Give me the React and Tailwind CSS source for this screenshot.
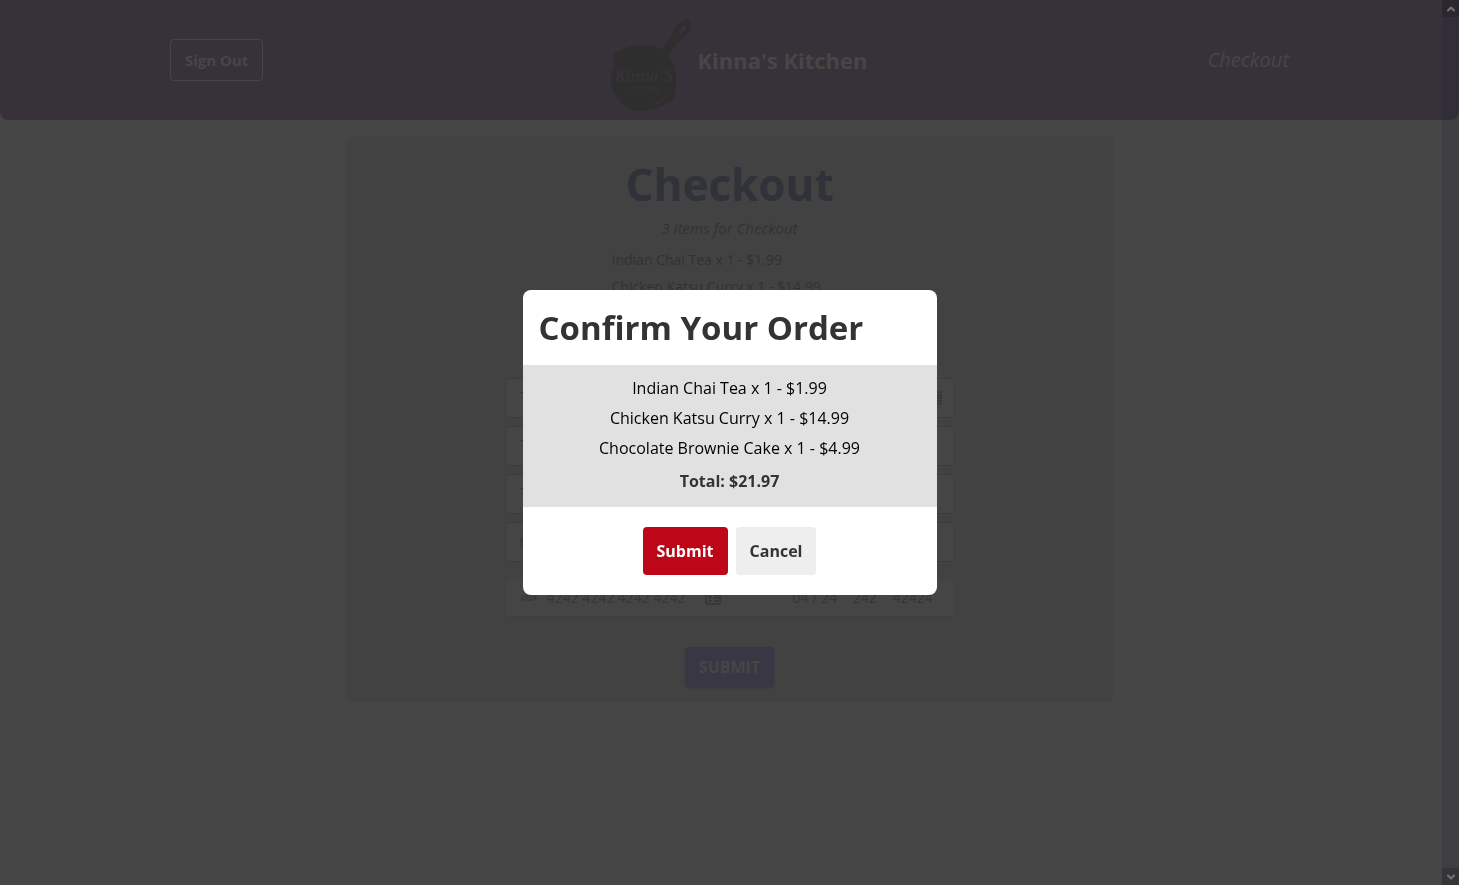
import { ChevronUp, ChevronDown } from "lucide-react";

const items = [
  "Indian Chai Tea x 1 - $1.99",
  "Chicken Katsu Curry x 1 - $14.99",
  "Chocolate Brownie Cake x 1 - $4.99",
];

function PanLogo() {
  return (
    <svg viewBox="0 -12 84 108" className="h-[108px] w-[84px]" role="img" aria-label="Kinna's Kitchen logo">
      <g fill="#2e2e2e">
        <path
          fillRule="evenodd"
          d="M51 33 C57 28 60 20 65 12 C68 6 72 3 76 2 C81 1 83 6 81 11 C79 16 73 21 68 26 C64 30 61 33 60 39 L56 41 Z M70 14 C69 17 71 18 74 15 C77 12 79 8 76 7 C74 7 71 10 70 14 Z"
        />
        <path d="M5 36 C12 31 21 27 34 27 C47 27 55 32 60 39 C66 47 68 56 67 66 C67 72 66 77 64 82 C58 84 50 92 36 93 C16 94 3 80 2 62 C2 54 4 50 6 47 C5 43 4 39 5 36 Z" />
      </g>
      <path d="M39 86 C48 86 56 80 62 73 C57 82 49 88 39 86 Z" fill="#37323a" />
      <text x="35" y="63" textAnchor="middle" fill="#37323a" fontFamily="Liberation Serif, serif" fontStyle="italic" fontWeight="700" fontSize="17">
        Kinna’S
      </text>
      <text x="36" y="75" textAnchor="middle" fill="#37323a" fontFamily="Lato, sans-serif" fontSize="7">
        KITCHEN
      </text>
    </svg>
  );
}

function CardIcon({ className }) {
  return (
    <svg viewBox="0 0 16 14" className={className} fill="none" stroke="currentColor" strokeWidth="1.5" aria-hidden="true">
      <rect x="1" y="1" width="14" height="12" rx="1.5" />
      <path d="M3 10h4M9 4.5h5M9 7h5M9 10h5" />
      <circle cx="5" cy="6" r="1" fill="currentColor" />
    </svg>
  );
}

function Field({ label, type = "text", value, icon }) {
  return (
    <label className="flex h-10 items-center rounded border border-[#3c3c3c] bg-[#454545] px-3">
      <span className="sr-only">{label}</span>
      <input type={type} defaultValue={value} className="min-w-0 flex-1 bg-transparent px-0.5 text-base text-[#373737] outline-none" />
      {icon && <CardIcon className="h-3.5 w-4 text-[#363636]" />}
    </label>
  );
}

function Header() {
  return (
    <header className="flex h-[120px] items-center justify-around rounded-b-lg bg-[#37323a] text-[#464646]">
      <button type="button" className="h-[42px] rounded border border-[#464646] px-3.5 text-[15px] font-bold">
        Sign Out
      </button>
      <div className="flex items-center gap-1 pl-1.5">
        <PanLogo />
        <h2 className="text-[22px] font-bold">Kinna's Kitchen</h2>
      </div>
      <a href="#checkout" className="text-xl italic">
        Checkout
      </a>
    </header>
  );
}

function CheckoutCard() {
  return (
    <main id="checkout" className="mx-auto mt-4 flex w-full max-w-3xl flex-col items-center rounded-lg bg-[#424242] pt-4 pb-4">
      <h1 className="text-[44px] leading-[64px] font-bold text-[#2f3238]">Checkout</h1>
      <p className="text-[15px] leading-6 text-[#323232] italic">3 Items for Checkout</p>
      <ul className="mt-1.5 w-[236px] text-sm leading-[27px] whitespace-nowrap text-[#2f3235]">
        {items.map((item) => (
          <li key={item}>{item}</li>
        ))}
      </ul>
      <p className="mt-1 text-base leading-6 font-bold text-[#2f3235]">Total: $21.97</p>
      <form className="mt-[23px] flex w-full max-w-[450px] flex-col gap-2" onSubmit={(e) => e.preventDefault()}>
        <Field label="Name" value="Test" icon />
        <Field label="Address" value="Test" />
        <Field label="City" value="Test" />
        <Field label="Email" type="email" value="test@test.com" />
        <div className="mt-2.5 flex h-9 items-center rounded bg-[#454545] px-4 text-sm text-[#353535] shadow-xs">
          <span className="w-[26px] text-[8px] font-bold text-[#35353f] italic">VISA</span>
          <input aria-label="Card number" defaultValue="4242 4242 4242 4242" className="w-[158px] bg-transparent outline-none" />
          <CardIcon className="h-3.5 w-4" />
          <span className="flex-1" />
          <input aria-label="Expiry" defaultValue="04 / 24" className="w-[60px] bg-transparent outline-none" />
          <input aria-label="CVC" defaultValue="242" className="w-10 bg-transparent outline-none" />
          <input aria-label="ZIP" defaultValue="42424" className="w-[46px] bg-transparent outline-none" />
        </div>
        <button type="submit" className="mt-[23px] h-10 self-center rounded bg-[#393744] px-3.5 text-base font-bold text-[#464646] shadow-sm">
          SUBMIT
        </button>
      </form>
    </main>
  );
}

function ConfirmDialog() {
  return (
    <div className="fixed inset-0 flex items-center justify-center">
      <section role="dialog" aria-modal="true" aria-labelledby="confirm-title" className="w-[414px] overflow-hidden rounded-lg bg-white">
        <h2 id="confirm-title" className="px-4 py-3 text-[33px] leading-[51px] font-bold text-[#333333]">
          Confirm Your Order
        </h2>
        <div className="bg-[#e1e1e1] px-4 pt-2 pb-3 text-center text-base text-black">
          <ul className="leading-[30px]">
            {items.map((item) => (
              <li key={item}>{item}</li>
            ))}
          </ul>
          <p className="mt-1 leading-7 font-bold text-[#333333]">Total: $21.97</p>
        </div>
        <div className="flex justify-center gap-2 py-5 text-base font-bold">
          <button type="button" className="h-12 rounded bg-[#bd0719] px-3.5 text-white">
            Submit
          </button>
          <button type="button" className="h-12 rounded bg-[#eeeeee] px-3.5 text-[#333333]">
            Cancel
          </button>
        </div>
      </section>
    </div>
  );
}

function ScrollRail() {
  return (
    <div className="fixed inset-y-0 right-0 flex w-[17px] flex-col items-center justify-between bg-[#18182c]/15 text-[#747474]" aria-hidden="true">
      <span className="flex h-[17px] w-full items-center justify-center bg-black/15">
        <ChevronUp className="size-3" strokeWidth={4} />
      </span>
      <span className="flex h-[17px] w-full items-center justify-center bg-black/15">
        <ChevronDown className="size-3" strokeWidth={4} />
      </span>
    </div>
  );
}

export default function App() {
  return (
    <div className="min-h-screen bg-[#464646] font-['Open_Sans','Noto_Sans',sans-serif]">
      <Header />
      <CheckoutCard />
      <ConfirmDialog />
      <ScrollRail />
    </div>
  );
}
